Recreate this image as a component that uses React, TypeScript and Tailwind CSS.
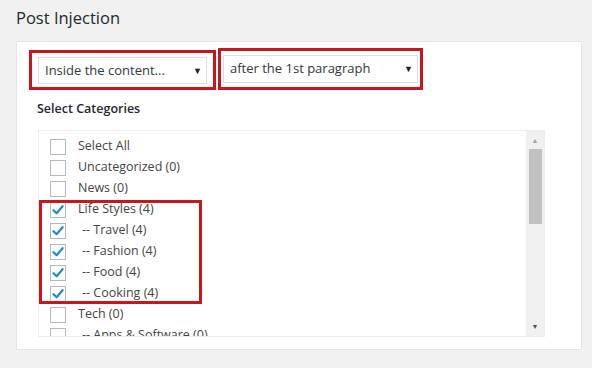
import React from "react";

const items: { label: string; checked: boolean; child?: boolean }[] = [
  { label: "Select All", checked: false },
  { label: "Uncategorized (0)", checked: false },
  { label: "News (0)", checked: false },
  { label: "Life Styles (4)", checked: true },
  { label: "-- Travel (4)", checked: true, child: true },
  { label: "-- Fashion (4)", checked: true, child: true },
  { label: "-- Food (4)", checked: true, child: true },
  { label: "-- Cooking (4)", checked: true, child: true },
  { label: "Tech (0)", checked: false },
  { label: "-- Apps & Software (0)", checked: false, child: true },
];

function Check() {
  return (
    <svg width="14" height="14" viewBox="0 0 14 14" className="block">
      <path d="M2.5 7.2 L5.6 10.2 L11.6 3.2" fill="none" stroke="#1e8cbe" strokeWidth="2.2" strokeLinecap="round" strokeLinejoin="round" />
    </svg>
  );
}

export default function App() {
  return (
    <div className="w-[592px] h-[368px] bg-[#f1f1f1] overflow-hidden" style={{ fontFamily: '"Open Sans", "Noto Sans", sans-serif' }}>
      <div className="pl-[16px] pt-[6px] h-[41px] text-[16.5px] text-[#23282d]">Post Injection</div>
      <div className="ml-[16px] w-[566px] h-[309px] bg-white border border-[#e5e5e5] pl-[12px] pt-[8px]">
        <div className="flex items-end gap-[2px] h-[40px]">
          <div className="w-[187px] h-[40px] border-[3px] border-[#c9161d] px-[6px] pt-[4px]">
            <div className="h-[27px] border border-[#dddddd] bg-white flex items-center justify-between pl-[6px] pr-[4px] text-[13px] text-[#32373c]">
              <span>Inside the content...</span>
              <span className="text-[9px] text-[#222]">▼</span>
            </div>
          </div>
          <div className="w-[205px] h-[42px] border-[3px] border-[#c9161d] px-[2px] pt-[4px]">
            <div className="h-[28px] border border-[#dddddd] bg-white flex items-center justify-between pl-[6px] pr-[4px] text-[13px] text-[#32373c]">
              <span>after the 1st paragraph</span>
              <span className="text-[9px] text-[#222]">▼</span>
            </div>
          </div>
        </div>
        <div className="pl-[8px] pt-[10px] h-[40px] text-[12.5px] font-semibold text-[#23282d]">Select Categories</div>
        <div className="relative ml-[9px] w-[507px] h-[207px] border border-[#eeeeee] flex">
          <div className="flex-1 pl-[11px] pt-[5px] overflow-hidden">
            {items.map((it) => (
              <div key={it.label} className="flex items-center h-[21px]">
                <div className="w-[16px] h-[16px] border border-[#b4b9be] bg-white flex items-center justify-center shrink-0">
                  {it.checked && <Check />}
                </div>
                <span className={`ml-[12px] text-[12.5px] text-[#444] whitespace-pre ${it.child ? "pl-[4px]" : ""}`}>{it.label}</span>
              </div>
            ))}
          </div>
          <div className="w-[18px] h-full bg-[#f0f0f0] flex flex-col items-center">
            <span className="text-[7px] text-[#a3a3a3] leading-none mt-[6px] h-[12px]">▲</span>
            <div className="w-[13px] h-[75px] bg-[#c1c1c1]" />
            <div className="flex-1" />
            <span className="text-[7px] text-[#505050] leading-none mb-[6px]">▼</span>
          </div>
          <div className="absolute left-[0px] top-[69px] w-[163px] h-[104px] border-[3px] border-[#c9161d]" />
        </div>
      </div>
    </div>
  );
}
